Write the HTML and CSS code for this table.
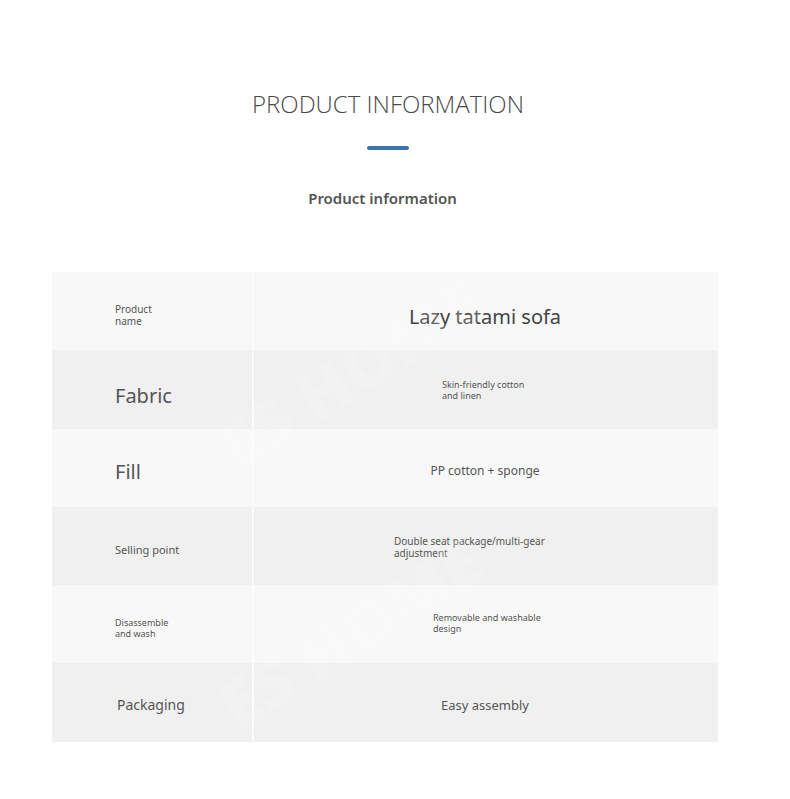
FILE: index.html
```html
<!DOCTYPE html>
<html>
<head>
<meta charset="utf-8">
<link rel="stylesheet" href="styles.css">
</head>
<body>
<section class="page">
  <h1 class="title">PRODUCT INFORMATION</h1>
  <div class="bar"></div>
  <h2 class="subtitle">Product information</h2>
  <div class="table">
    <div class="row light">
      <div class="label"><span class="t10 w-pn">Product name</span></div>
      <div class="value"><span class="t20 lazy">Lazy tatami sofa</span></div>
    </div>
    <div class="row dark">
      <div class="label"><span class="t20 fab">Fabric</span></div>
      <div class="value"><span class="t9 w-skin">Skin-friendly cotton and linen</span></div>
    </div>
    <div class="row light">
      <div class="label"><span class="t20">Fill</span></div>
      <div class="value"><span class="t12 pp">PP cotton + sponge</span></div>
    </div>
    <div class="row dark">
      <div class="label"><span class="t11">Selling point</span></div>
      <div class="value"><span class="t10 w-dbl">Double seat package/multi-gear adjustment</span></div>
    </div>
    <div class="row light">
      <div class="label"><span class="t9 w-dis">Disassemble and wash</span></div>
      <div class="value"><span class="t9 w-rem">Removable and washable design</span></div>
    </div>
    <div class="row dark">
      <div class="label"><span class="t14 pk">Packaging</span></div>
      <div class="value"><span class="t13 easy">Easy assembly</span></div>
    </div>
    <div class="mark mark-a">ES HOME</div>
    <div class="mark mark-b">ES HOME</div>
  </div>
</section>
</body>
</html>
```

FILE: styles.css
```css
* { box-sizing: border-box; }
html, body { margin: 0; padding: 0; background: #fff; }
body { font-family: "Noto Sans", "Open Sans", sans-serif; color: #555; }
.page { width: 776px; padding-top: 87px; }
.title {
  margin: 0;
  text-align: center;
  font-family: "Open Sans", sans-serif;
  font-weight: 300;
  font-size: 24px;
  line-height: 33px;
  color: #4a4a4a;
}
.bar {
  width: 42px; height: 4px; border-radius: 2px;
  background: #3f74a9;
  margin: 26px auto 0;
}
.subtitle {
  margin: 38px 0 0;
  text-align: center;
  font-size: 15px;
  font-weight: 600;
  line-height: 20px;
  color: #555;
  padding-right: 11px;
}
.table {
  position: relative;
  margin: 64px 0 0 52px;
  width: 666px;
}
.row {
  display: grid;
  grid-template-columns: 202px 1fr;
  height: 78.3px;
}
.light { background: #f8f8f8; }
.dark { background: #f0f0f0; }
.label {
  display: flex; align-items: center;
  padding-left: 63px;
  padding-top: 8px;
  border-right: 2px solid #fbfbfb;
}
.value {
  display: flex; align-items: center; justify-content: center;
  padding-right: 2px;
  padding-top: 8px;
}
.t9 { font-size: 9px; line-height: 11px; }
.t10 { font-size: 10px; line-height: 12px; }
.t11 { font-size: 11px; line-height: 14px; }
.t12 { font-size: 12px; line-height: 16px; }
.t13 { font-size: 13px; line-height: 17px; }
.t14 { font-size: 14px; line-height: 18px; }
.t20 { font-size: 20px; line-height: 26px; }
.pk { margin-left: 2px; margin-top: -4px; }
.lazy { margin-top: 4px; }
.fab { margin-top: 6px; }
.pp { margin-top: -2px; }
.easy { margin-top: -2px; }
.w-pn { width: 44px; }
.w-dis { width: 60px; }
.w-skin { width: 86px; margin-top: -6px; }
.w-dbl { width: 182px; margin-top: -6px; }
.w-rem { width: 112px; margin-top: -10px; margin-left: 8px; }
.value .t20 { color: #444; }
.mark {
  position: absolute;
  font-family: "Open Sans", sans-serif;
  font-weight: 800;
  font-size: 66px;
  line-height: 80px;
  color: rgba(255,255,255,0.18);
  transform: rotate(-32deg);
  white-space: nowrap;
  pointer-events: none;
}
.mark-a { left: 150px; top: 60px; }
.mark-b { left: 150px; top: 320px; }
```
